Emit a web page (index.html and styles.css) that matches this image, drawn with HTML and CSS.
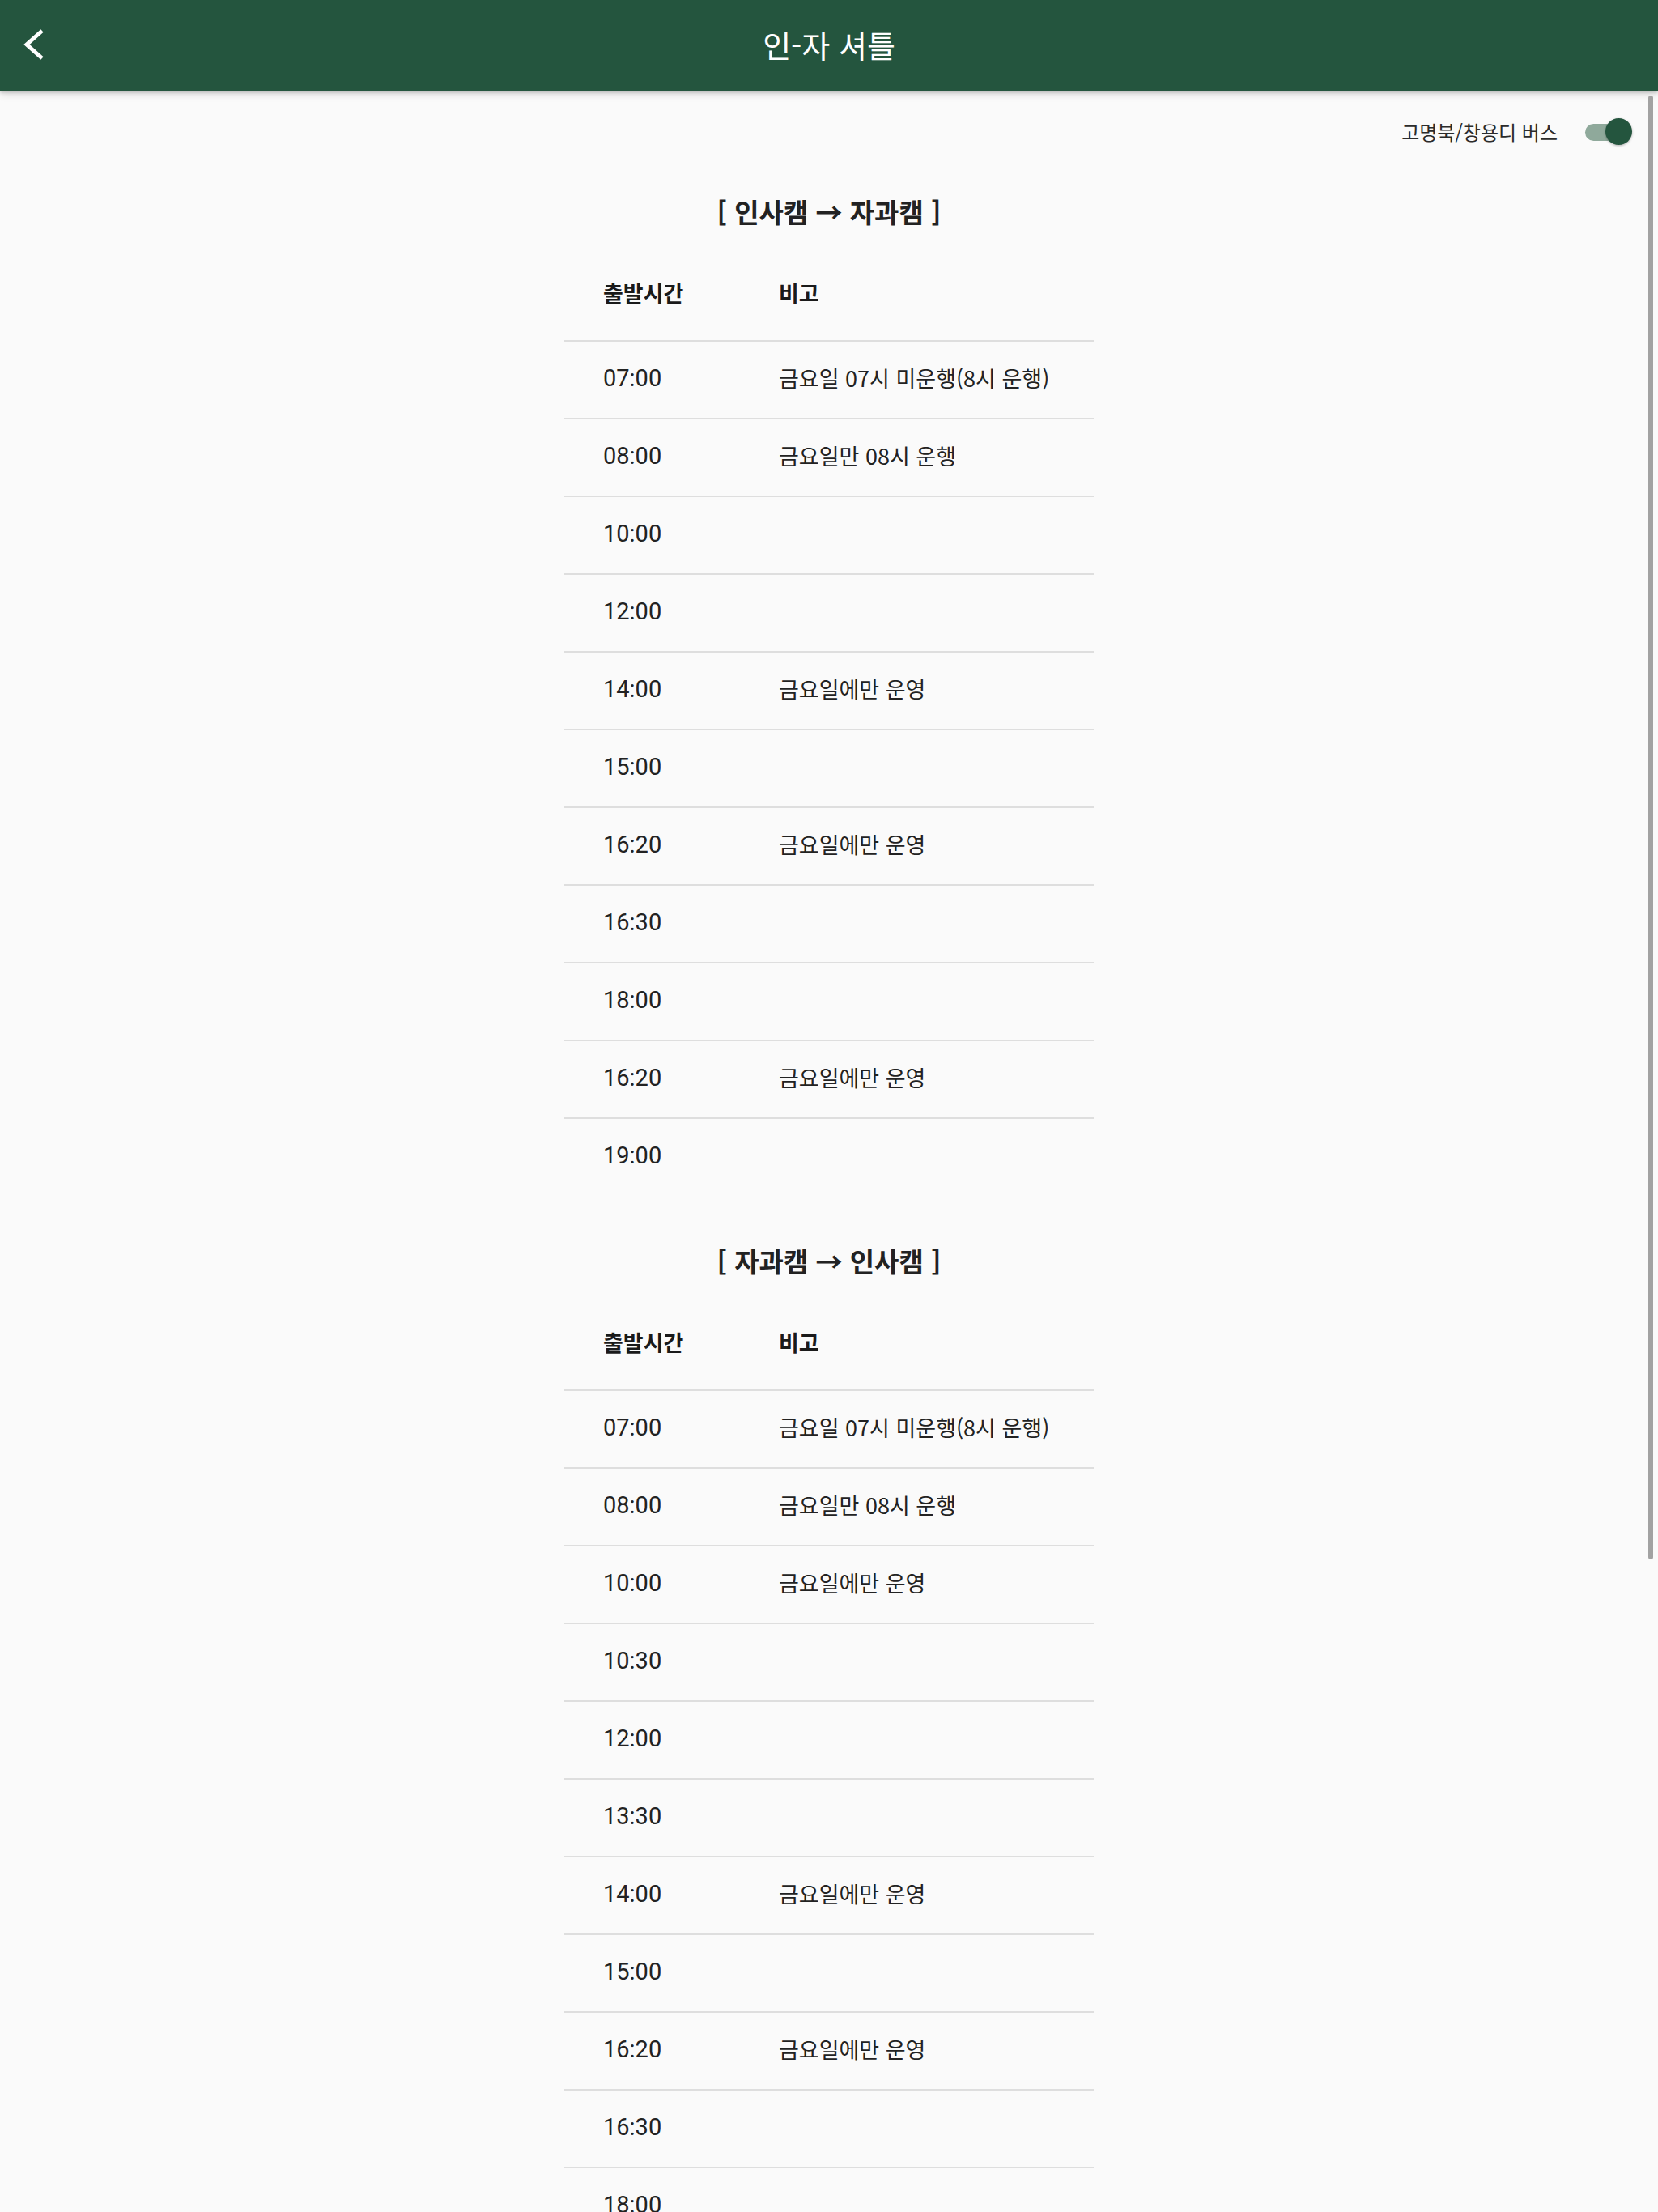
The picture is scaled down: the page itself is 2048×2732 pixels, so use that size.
FILE: index.html
```html
<!DOCTYPE html>
<html lang="ko">
<head>
<meta charset="utf-8">
<title>인-자 셔틀</title>
<link rel="stylesheet" href="styles.css">
</head>
<body>
<div class="screen">
  <header class="appbar">
    <svg class="back" viewBox="0 0 30 44" width="30" height="44" aria-hidden="true">
      <polyline points="24,4 5,21 24,38" fill="none" stroke="#ffffff" stroke-width="5" stroke-linejoin="miter"/>
    </svg>
    <h1 class="appbar-title">인-자 셔틀</h1>
  </header>

  <main class="content">
    <div class="toggle-row">
      <span class="toggle-label">고명북/창용디 버스</span>
      <span class="switch"><span class="switch-track"></span><span class="switch-thumb"></span></span>
    </div>

    <section class="section">
      <h2 class="section-title">[ 인사캠 → 자과캠 ]</h2>
      <div class="table">
        <div class="row head"><span class="c1">출발시간</span><span class="c2">비고</span></div>
        <div class="row"><span class="c1">07:00</span><span class="c2">금요일 07시 미운행(8시 운행)</span></div>
        <div class="row"><span class="c1">08:00</span><span class="c2">금요일만 08시 운행</span></div>
        <div class="row"><span class="c1">10:00</span><span class="c2"></span></div>
        <div class="row"><span class="c1">12:00</span><span class="c2"></span></div>
        <div class="row"><span class="c1">14:00</span><span class="c2">금요일에만 운영</span></div>
        <div class="row"><span class="c1">15:00</span><span class="c2"></span></div>
        <div class="row"><span class="c1">16:20</span><span class="c2">금요일에만 운영</span></div>
        <div class="row"><span class="c1">16:30</span><span class="c2"></span></div>
        <div class="row"><span class="c1">18:00</span><span class="c2"></span></div>
        <div class="row"><span class="c1">16:20</span><span class="c2">금요일에만 운영</span></div>
        <div class="row"><span class="c1">19:00</span><span class="c2"></span></div>
      </div>
    </section>

    <section class="section">
      <h2 class="section-title">[ 자과캠 → 인사캠 ]</h2>
      <div class="table">
        <div class="row head"><span class="c1">출발시간</span><span class="c2">비고</span></div>
        <div class="row"><span class="c1">07:00</span><span class="c2">금요일 07시 미운행(8시 운행)</span></div>
        <div class="row"><span class="c1">08:00</span><span class="c2">금요일만 08시 운행</span></div>
        <div class="row"><span class="c1">10:00</span><span class="c2">금요일에만 운영</span></div>
        <div class="row"><span class="c1">10:30</span><span class="c2"></span></div>
        <div class="row"><span class="c1">12:00</span><span class="c2"></span></div>
        <div class="row"><span class="c1">13:30</span><span class="c2"></span></div>
        <div class="row"><span class="c1">14:00</span><span class="c2">금요일에만 운영</span></div>
        <div class="row"><span class="c1">15:00</span><span class="c2"></span></div>
        <div class="row"><span class="c1">16:20</span><span class="c2">금요일에만 운영</span></div>
        <div class="row"><span class="c1">16:30</span><span class="c2"></span></div>
        <div class="row"><span class="c1">18:00</span><span class="c2"></span></div>
        <div class="row"><span class="c1">19:00</span><span class="c2"></span></div>
      </div>
    </section>
  </main>

  <div class="scrollbar"></div>
</div>
</body>
</html>
```
FILE: styles.css
```css
* { box-sizing: border-box; }
html, body {
  margin: 0;
  padding: 0;
  background: #fafafa;
}
body {
  font-family: "Noto Sans CJK KR", "Noto Sans", sans-serif;
  color: #212121;
}
.screen {
  position: relative;
  width: 2048px;
  height: 2732px;
  overflow: hidden;
  background: #fafafa;
}
.appbar {
  position: relative;
  z-index: 2;
  height: 112px;
  background: #24553e;
  display: flex;
  align-items: center;
  justify-content: center;
  box-shadow: 0 2px 4px rgba(0,0,0,0.2), 0 4px 10px rgba(0,0,0,0.14);
}
.back {
  position: absolute;
  left: 28px;
  top: 34px;
}
.appbar-title {
  margin: 0;
  color: #ffffff;
  font-size: 38px;
  font-weight: 400;
  line-height: 1;
  padding-bottom: 2px;
}
.content {
  display: flex;
  flex-direction: column;
}
.toggle-row {
  display: flex;
  justify-content: flex-end;
  align-items: center;
  gap: 34px;
  height: 68px;
  padding-top: 34px;
  padding-right: 32px;
}
.toggle-label {
  font-size: 24px;
  color: #2b2b2b;
  line-height: 1;
}
.switch {
  position: relative;
  width: 58px;
  height: 34px;
  display: flex;
  align-items: center;
}
.switch-track {
  width: 53px;
  height: 21px;
  border-radius: 11px;
  background: #8fa99b;
}
.switch-thumb {
  position: absolute;
  right: 0;
  top: 0;
  width: 33px;
  height: 33px;
  border-radius: 50%;
  background: #24553e;
  box-shadow: 0 1px 3px rgba(0,0,0,0.3);
}
.section {
  padding-top: 57px;
  display: flex;
  flex-direction: column;
  align-items: center;
}
.section-title {
  margin: 0 0 23px;
  height: 48px;
  line-height: 48px;
  font-size: 33px;
  font-weight: 700;
  color: #222;
}
.table {
  width: 654px;
}
.row {
  display: grid;
  grid-template-columns: 217px 1fr;
  align-items: center;
  height: 96px;
  padding-left: 48px;
  padding-bottom: 5px;
  border-top: 2px solid #dedede;
  font-size: 27px;
  color: #222;
}
.row .c1 {
  font-family: "Roboto", "Noto Sans CJK KR", sans-serif;
  font-size: 29px;
}
.row.head {
  height: 112px;
  border-top: none;
  font-weight: 700;
  color: #1a1a1a;
}
.row.head .c1 {
  font-family: "Noto Sans CJK KR", sans-serif;
  font-size: 27px;
}
.scrollbar {
  position: absolute;
  z-index: 3;
  right: 6px;
  top: 118px;
  width: 6px;
  height: 1808px;
  border-radius: 3px;
  background: #a2a2a2;
}
```
